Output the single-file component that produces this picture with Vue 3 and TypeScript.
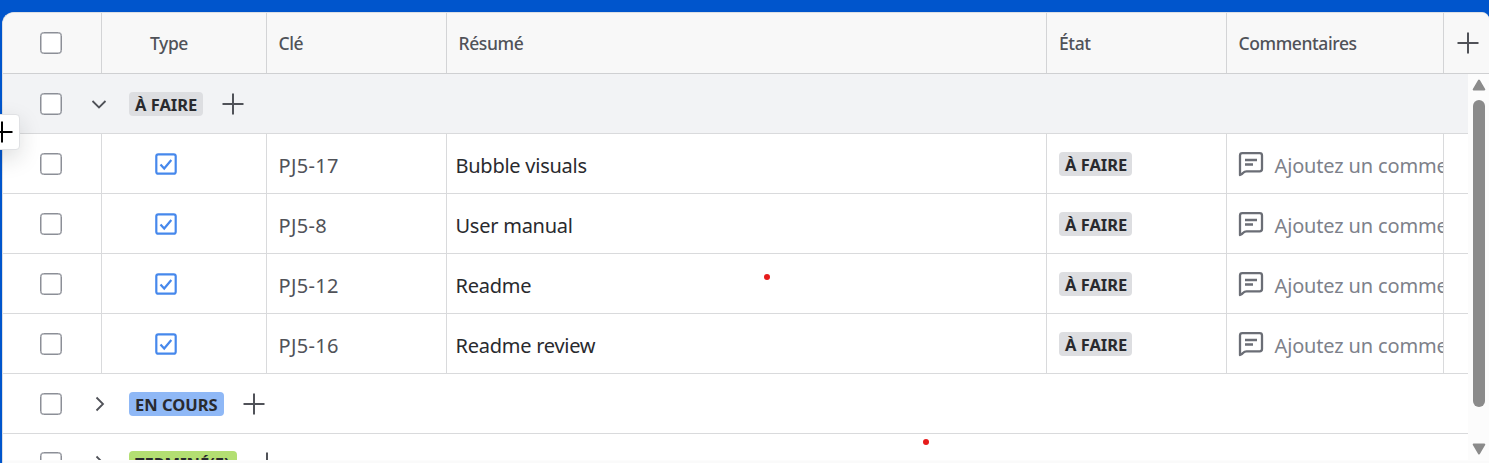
<script setup lang="ts">
interface Issue {
  key: string
  summary: string
}

const issues: Issue[] = [
  { key: 'PJ5-17', summary: 'Bubble visuals' },
  { key: 'PJ5-8', summary: 'User manual' },
  { key: 'PJ5-12', summary: 'Readme' },
  { key: 'PJ5-16', summary: 'Readme review' },
]
const closedGroups = [
  { label: 'EN COURS', tone: 'progress' },
  { label: 'TERMINÉ(E)', tone: 'done' },
]
</script>

<template>
  <div class="screen">
    <div class="board">
      <div class="row head">
        <div class="cell check"><i class="box"></i></div>
        <div class="cell type"><span>Type</span></div>
        <div class="cell key"><span>Clé</span></div>
        <div class="cell summary"><span>Résumé</span></div>
        <div class="cell state"><span>État</span></div>
        <div class="cell comments"><span>Commentaires</span></div>
        <div class="add-column">
          <svg class="plus" viewBox="0 0 22 22"><path d="M11 .5v21M.5 11h21" /></svg>
        </div>
      </div>
      <div class="body">
        <div class="rows">
          <div class="row group open">
            <i class="box"></i>
            <svg class="chevron" viewBox="0 0 16 16"><path d="M1.500 5l6.500 6.500L14.500 5" /></svg>
            <span class="badge todo"><span>À FAIRE</span></span>
            <svg class="plus" viewBox="0 0 22 22"><path d="M11 .5v21M.5 11h21" /></svg>
          </div>
          <div v-for="issue in issues" :key="issue.key" class="row">
            <div class="cell check"><i class="box"></i></div>
            <div class="cell type">
              <svg class="task" viewBox="0 0 22 22">
                <rect x="1.300" y="1.300" width="19.400" height="19.400" rx="2" />
                <path d="M5.500 11.500l3.700 4L16.300 7" />
              </svg>
            </div>
            <div class="cell key"><span class="key-text">{{ issue.key }}</span></div>
            <div class="cell summary"><span class="summary-text">{{ issue.summary }}</span></div>
            <div class="cell state"><span class="badge todo"><span>À FAIRE</span></span></div>
            <div class="cell comments">
              <svg class="bubble" viewBox="0 0 26 26">
                <path d="M2 24V4.500Q2 2.200 4.300 2.200H21.700Q24 2.200 24 4.500V18Q24 20.300 21.700 20.300H8.500Q6.500 20.300 5.500 21.500Q4 23.200 2 24Z" />
                <path d="M7 9h12M7 13.500h8" />
              </svg>
              <span class="comment-text">Ajoutez un commentaire</span>
            </div>
          </div>
          <div v-for="group in closedGroups" :key="group.label" class="row group closed">
            <i class="box"></i>
            <svg class="chevron" viewBox="0 0 16 16"><path d="M5.500 1.500L12 8L5.500 14.500" /></svg>
            <span class="badge" :class="group.tone"><span>{{ group.label }}</span></span>
            <svg class="plus" viewBox="0 0 22 22"><path d="M11 .5v21M.5 11h21" /></svg>
          </div>
        </div>
        <div class="scrollbar">
          <svg class="arrow" viewBox="0 0 14 12"><path d="M7 1.500L12.300 10.500H1.700Z" /></svg>
          <div class="thumb"></div>
          <svg class="arrow" viewBox="0 0 14 12"><path d="M7 10.500L12.300 1.500H1.700Z" /></svg>
        </div>
      </div>
    </div>
    <div class="drawer-button">
      <svg class="plus" viewBox="0 0 22 22"><path d="M11 .5v21M.5 11h21" /></svg>
    </div>
    <i class="dot first"></i>
    <i class="dot second"></i>
  </div>
</template>

<style>
body { margin: 0; overflow: hidden; }
</style>

<style scoped>
* { box-sizing: border-box; }
.screen {
  position: relative;
  width: 1489px;
  height: 463px;
  padding: 12px 0 0 2px;
  overflow: hidden;
  background: #0055cc;
  font-family: "Noto Sans", "Open Sans", sans-serif;
  white-space: nowrap;
}
.board {
  height: 451px;
  overflow: hidden;
  border: 1px solid #dcdfe4;
  border-width: 1px 0 0 1px;
  border-radius: 12px 7px 0 0;
  background: #fafafa;
}
.row { display: flex; height: 60px; border-bottom: 1px solid #d9dadc; }
.cell { display: flex; align-items: center; flex: none; overflow: hidden; border-right: 1px solid #d9dadc; }
.check { width: 99px; padding-left: 37px; }
.type { width: 165px; }
.key { width: 180px; padding-left: 11.500px; }
.summary { width: 600px; padding-left: 8.500px; }
.state { width: 180px; padding-left: 12px; }
.comments { width: 217px; padding-left: 11px; }
.head { height: 61px; background: #f8f8f8; border-color: #cfd0d2; color: #505258; font-size: 17.500px; font-weight: 500; letter-spacing: -0.400px; }
.head .cell { border-color: #d3d4d6; }
.head .type { padding-left: 48px; }
.head .summary, .head .comments { padding-left: 11.500px; }
.add-column { display: flex; align-items: center; padding-left: 13px; }
.box { flex: none; width: 22px; height: 22px; border: 1.500px solid #8c8f97; border-radius: 3.500px; background: #fff; box-shadow: inset 0 0 0 0.500px #8c8f97; }
.plus { flex: none; width: 22px; height: 22px; fill: none; stroke: #505258; stroke-width: 2; }
.body { display: flex; height: 387px; background: #fcfcfc; }
.rows { width: 1465px; height: 386px; overflow: hidden; background: #fff; }
.group { align-items: center; padding-left: 37px; }
.group.open { background: #f2f3f5; }
.closed:last-child { height: 58px; }
.chevron { width: 16px; height: 16px; margin: 0 22px 0 29px; fill: none; stroke: #505258; stroke-width: 1.800; }
.group .plus { margin-left: 19px; }
.badge {
  display: flex;
  align-items: center;
  height: 24px;
  padding: 0 6px;
  border-radius: 4px;
  color: #292a2e;
  font-size: 16.500px;
  font-weight: 700;
}
.todo { width: 73px; background: #dddee1; }
.group .todo { width: 74px; }
.progress { width: 95px; background: #8fb8f6; }
.done { width: 108px; background: #b3df72; }
.badge span { position: relative; top: 1px; }
.type .task { width: 22px; height: 22px; margin-left: 53px; }
.task { fill: none; stroke: #4688ec; stroke-width: 2.200; }
.key-text, .summary-text, .comment-text { position: relative; top: 1.500px; font-size: 20px; }
.key-text { color: #505258; letter-spacing: 0.300px; }
.summary-text { color: #292a2e; letter-spacing: -0.250px; }
.comment-text { margin-left: 10.500px; color: #7d818a; letter-spacing: -0.150px; }
.bubble { flex: none; width: 26px; height: 26px; fill: none; stroke: #6b6e76; stroke-width: 2.300; stroke-linejoin: round; }
.scrollbar { display: flex; flex-direction: column; align-items: center; width: 21px; padding-top: 5px; }
.arrow { width: 14px; height: 12px; fill: #8b8b8b; stroke: #8b8b8b; stroke-width: 2; stroke-linejoin: round; }
.thumb { width: 12px; height: 307px; margin: 9px 0 36px; border-radius: 6px; background: #8b8b8b; }
.drawer-button {
  position: absolute;
  left: -20px;
  top: 114px;
  display: flex;
  align-items: center;
  justify-content: flex-end;
  width: 40px;
  height: 36px;
  padding-right: 6px;
  border: 1px solid #e0e1e4;
  border-radius: 4px;
  background: #fff;
  box-shadow: 0 8px 22px rgba(30, 31, 33, 0.150);
}
.drawer-button .plus { stroke: #000; }
.dot { position: absolute; width: 6px; height: 6px; border-radius: 50%; background: #e61b1b; }
.first { left: 764px; top: 274px; }
.second { left: 923px; top: 439px; }
</style>
